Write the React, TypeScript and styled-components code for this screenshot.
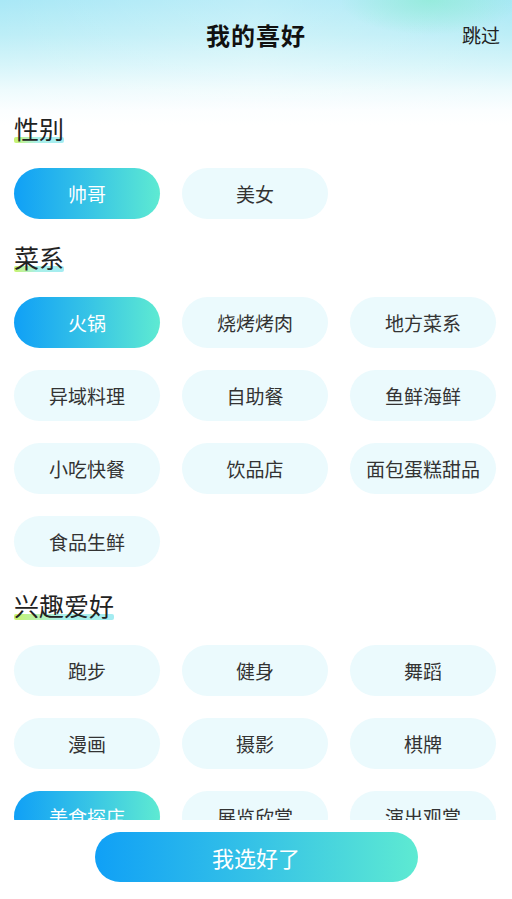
import styled, { createGlobalStyle } from "styled-components";

const GlobalStyle = createGlobalStyle`
  html, body {
    margin: 0;
    padding: 0;
    background: #fff;
  }
  body {
    font-family: "Noto Sans CJK SC", "Noto Sans", sans-serif;
  }
`;

const sections = [
  { title: "性别", items: ["帅哥", "美女"], selected: ["帅哥"] },
  {
    title: "菜系",
    items: [
      "火锅",
      "烧烤烤肉",
      "地方菜系",
      "异域料理",
      "自助餐",
      "鱼鲜海鲜",
      "小吃快餐",
      "饮品店",
      "面包蛋糕甜品",
      "食品生鲜",
    ],
    selected: ["火锅"],
  },
  {
    title: "兴趣爱好",
    items: ["跑步", "健身", "舞蹈", "漫画", "摄影", "棋牌", "美食探店", "展览欣赏", "演出观赏"],
    selected: ["美食探店"],
  },
];

const App = () => {
  return (
    <Page>
      <GlobalStyle />
      <Header>
        <Title>我的喜好</Title>
        <Skip>跳过</Skip>
      </Header>
      <Scroll>
        {sections.map((s) => (
          <Section key={s.title}>
            <SectionTitle>
              <span>{s.title}</span>
            </SectionTitle>
            <ChipGrid>
              {s.items.map((item) => (
                <Chip key={item} active={s.selected.includes(item)}>
                  {item}
                </Chip>
              ))}
            </ChipGrid>
          </Section>
        ))}
      </Scroll>
      <Footer>
        <Submit>我选好了</Submit>
      </Footer>
    </Page>
  );
};

export default App;

const Page = styled.div`
  width: 512px;
  height: 899px;
  display: flex;
  flex-direction: column;
  overflow: hidden;
  background:
    radial-gradient(ellipse 90px 35px at 430px 0px, rgba(140, 236, 210, 0.7), rgba(140, 236, 210, 0) 100%),
    linear-gradient(90deg, rgba(255, 255, 255, 0) 0%, rgba(255, 255, 255, 0.25) 50%, rgba(255, 255, 255, 0) 100%),
    linear-gradient(180deg, #a9e8f6 0px, #bdeef7 35px, #d6f5fa 65px, #eefbfd 90px, #fbfeff 110px, #ffffff 125px, #ffffff 100%);
`;

const Header = styled.div`
  height: 68px;
  flex-shrink: 0;
  position: relative;
  display: flex;
  align-items: center;
  justify-content: center;
`;

const Title = styled.div`
  font-size: 24px;
  font-weight: 700;
  color: #111;
  letter-spacing: 1px;
`;

const Skip = styled.div`
  position: absolute;
  right: 12px;
  top: 21px;
  font-size: 19px;
  color: #222;
`;

const Scroll = styled.div`
  flex: 1;
  overflow: hidden;
  padding: 45px 16px 0 14px;
  display: flex;
  flex-direction: column;
  gap: 23px;
`;

const Section = styled.div`
  display: flex;
  flex-direction: column;
  gap: 25px;
`;

const SectionTitle = styled.div`
  height: 30px;
  line-height: 30px;
  font-size: 25px;
  color: #222;

  span {
    position: relative;
    display: inline-block;
    z-index: 0;
  }
  span::after {
    content: "";
    position: absolute;
    left: 0;
    right: 0;
    bottom: 0px;
    height: 6px;
    border-radius: 2px;
    background: linear-gradient(90deg, #c8f36c 0%, #a9f0e8 45%, #a4ecf2 100%);
    z-index: -1;
  }
`;

const ChipGrid = styled.div`
  display: grid;
  grid-template-columns: repeat(3, 146px);
  column-gap: 22px;
  row-gap: 22px;
`;

const Chip = styled.div<{ active?: boolean }>`
  height: 51px;
  border-radius: 26px;
  display: flex;
  align-items: center;
  justify-content: center;
  font-size: 19px;
  color: ${({ active }) => (active ? "#fff" : "#333")};
  background: ${({ active }) =>
    active ? "linear-gradient(90deg, #10a0f6 0%, #36c3e6 50%, #5eead2 100%)" : "#ebfafd"};
`;

const Footer = styled.div`
  height: 79px;
  flex-shrink: 0;
  background: #fff;
  display: flex;
  justify-content: center;
  padding-top: 12px;
  box-sizing: border-box;
`;

const Submit = styled.div`
  width: 323px;
  height: 50px;
  border-radius: 25px;
  display: flex;
  align-items: center;
  justify-content: center;
  font-size: 22px;
  color: #fff;
  background: linear-gradient(90deg, #10a0f6 0%, #36c3e6 50%, #5eead2 100%);
`;
